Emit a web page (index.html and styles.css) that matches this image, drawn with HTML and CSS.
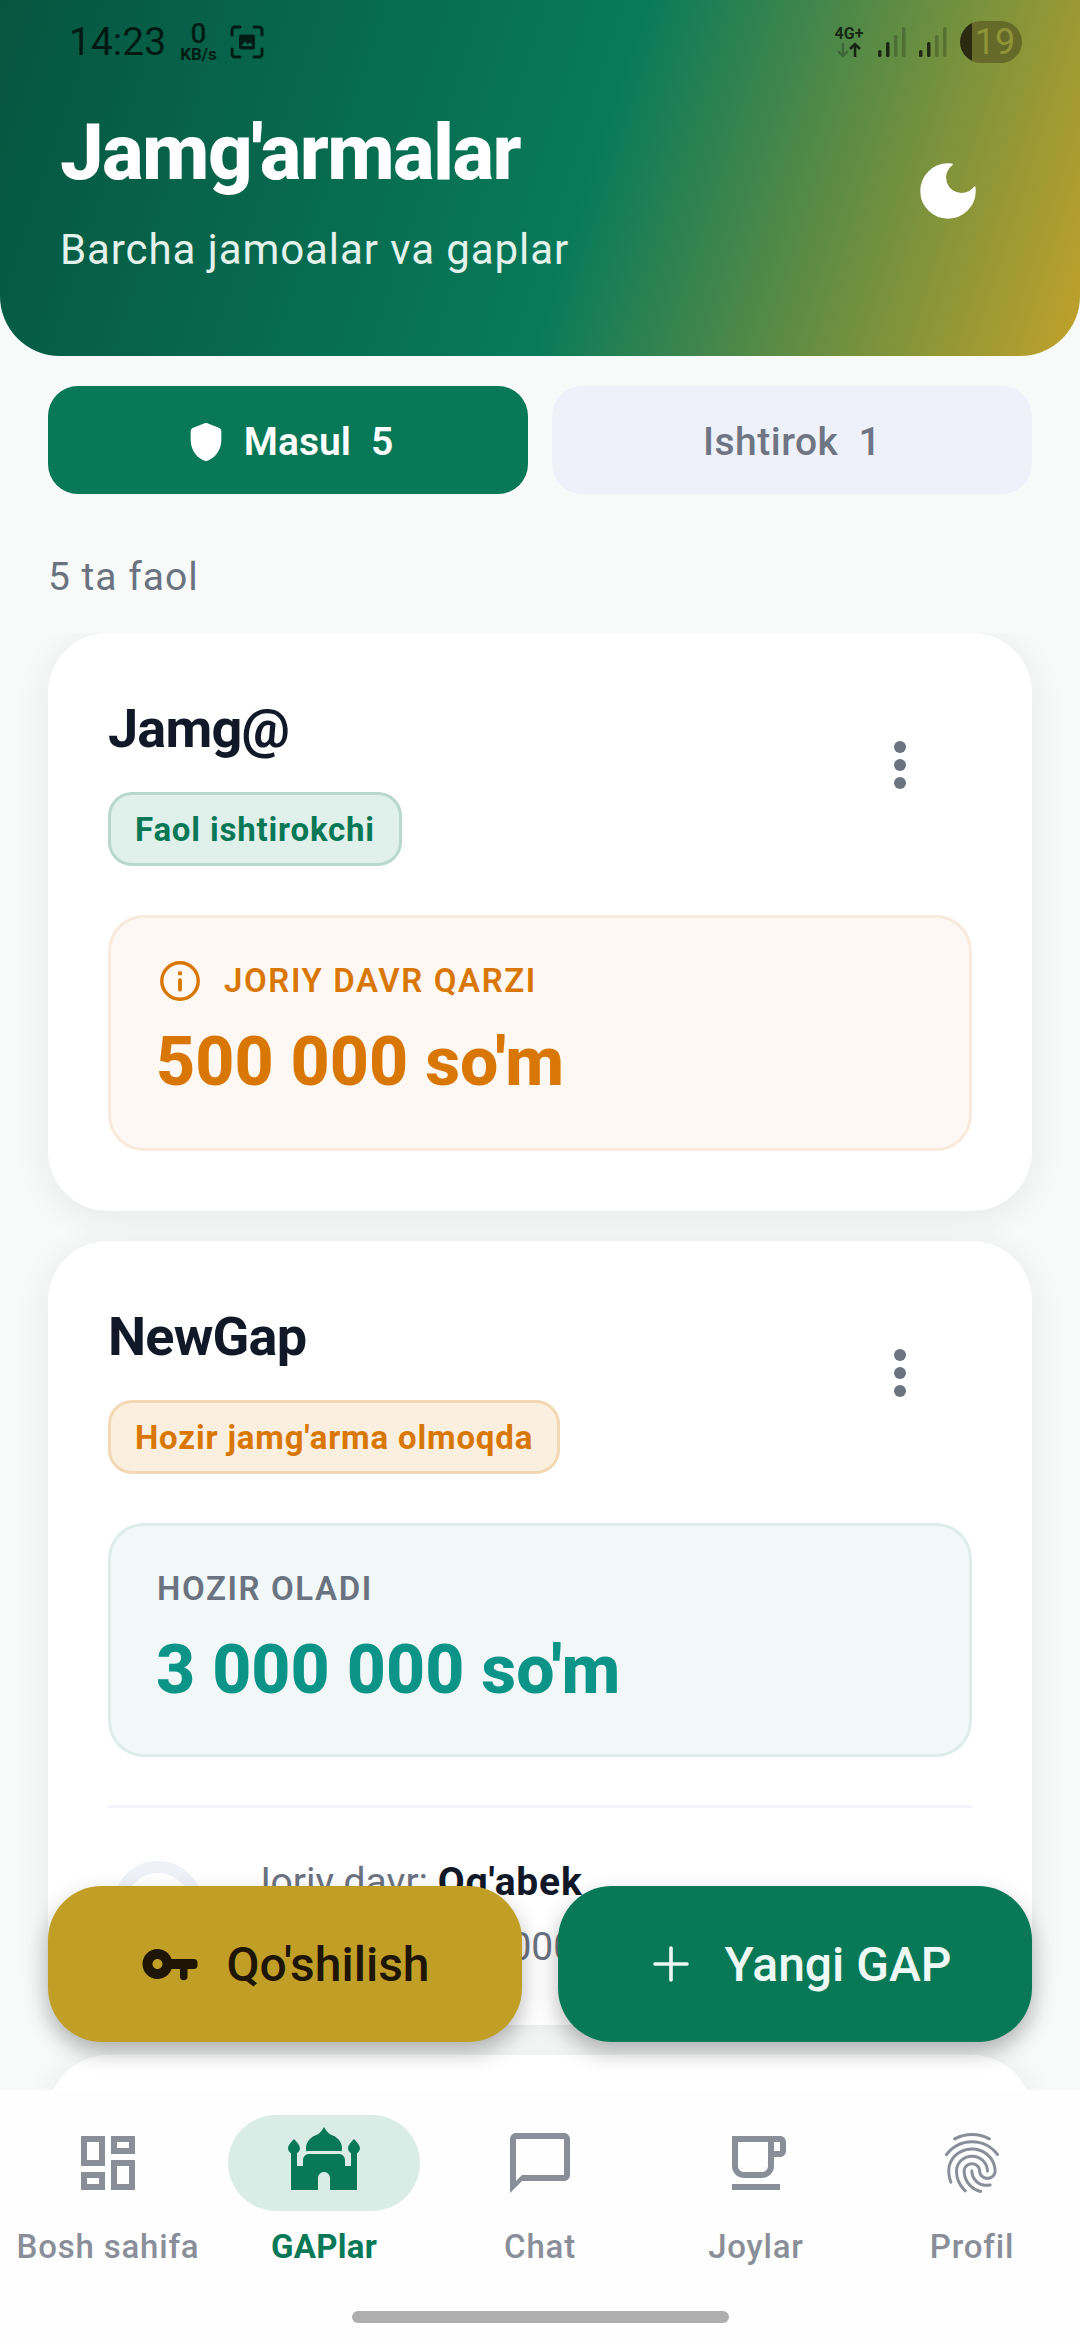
FILE: index.html
```html
<!DOCTYPE html>
<html lang="uz">
<head>
    <meta charset="UTF-8">
    <meta name="viewport" content="width=device-width, initial-scale=1.0">
    <title>Jamg'armalar</title>
    <link rel="stylesheet" href="styles.css">
</head>
<body>
    <div class="app">
        <header class="header">
            <div class="status">
                <span class="status-time">14:23</span>
                <span class="status-speed"><b>0</b><i>KB/s</i></span>
                <svg class="status-shot" viewBox="0 0 36 36"><path d="M3 11V6a3 3 0 0 1 3-3h5M25 3h5a3 3 0 0 1 3 3v5M33 25v5a3 3 0 0 1-3 3h-5M11 33H6a3 3 0 0 1-3-3v-5" fill="none" stroke="currentColor" stroke-width="3" stroke-linecap="round"/><path d="M10 12.5a2 2 0 0 1 2-2h12a2 2 0 0 1 2 2v11a2 2 0 0 1-2 2H12a2 2 0 0 1-2-2z" fill="currentColor"/><path d="M12.5 22l3.5-4.5 2.500 3 2.500-2 3 3.500z" fill="#0a6a50"/></svg>
                <span class="status-spacer"></span>
                <span class="status-net"><b>4G+</b><svg viewBox="0 0 26 16"><path d="M7 1v13M2 9l5 5 5-5" fill="none" stroke="currentColor" stroke-width="2.400" opacity=".35"/><path d="M19 15V2M14 7l5-5 5 5" fill="none" stroke="currentColor" stroke-width="2.600"/></svg></span>
                <svg class="status-signal" viewBox="0 0 28 30"><rect x="0" y="23" width="3.500" height="7" rx="1.500" fill="currentColor"/><rect x="8" y="15" width="3.500" height="15" rx="1.500" fill="currentColor"/><rect x="16" y="8" width="3.500" height="22" rx="1.500" fill="currentColor" opacity=".3"/><rect x="24" y="0" width="3.500" height="30" rx="1.500" fill="currentColor" opacity=".3"/></svg>
                <svg class="status-signal" viewBox="0 0 28 30"><rect x="0" y="23" width="3.500" height="7" rx="1.500" fill="currentColor"/><rect x="8" y="15" width="3.500" height="15" rx="1.500" fill="currentColor"/><rect x="16" y="8" width="3.500" height="22" rx="1.500" fill="currentColor" opacity=".3"/><rect x="24" y="0" width="3.500" height="30" rx="1.500" fill="currentColor" opacity=".3"/></svg>
                <span class="status-battery">19</span>
            </div>
            <div class="header-row">
                <div>
                    <h1>Jamg'armalar</h1>
                    <p>Barcha jamoalar va gaplar</p>
                </div>
                <svg class="moon" viewBox="0 0 24 24"><path d="M12 3a9 9 0 1 0 9 9c0-.46-.04-.92-.1-1.360a5.389 5.389 0 0 1-4.400 2.260 5.403 5.403 0 0 1-3.140-9.800c-.44-.06-.9-.1-1.360-.1z" fill="#fff" stroke="#fff" stroke-width=".5" stroke-linejoin="round"/></svg>
            </div>
        </header>

        <div class="tabs">
            <div class="tab tab-active">
                <svg viewBox="0 0 24 24"><path d="M11.300 2.260l-6 2.250C4.520 4.810 4 5.550 4 6.390v4.710c0 5.050 3.410 9.760 8 10.910 4.590-1.150 8-5.860 8-10.910V6.390c0-.83-.52-1.580-1.300-1.870l-6-2.250c-.45-.17-.95-.17-1.400-.01z" fill="#fff"/></svg>
                <span>Masul</span>
                <span>5</span>
            </div>
            <div class="tab">
                <span>Ishtirok</span>
                <span>1</span>
            </div>
        </div>

        <div class="count">5 ta faol</div>

        <div class="list">
            <div class="card">
                <div class="card-head">
                    <div class="card-info">
                        <h2>Jamg@</h2>
                        <span class="badge badge-green">Faol ishtirokchi</span>
                    </div>
                    <svg class="dots" viewBox="0 0 12 48"><circle cx="6" cy="6" r="6"/><circle cx="6" cy="24" r="6"/><circle cx="6" cy="42" r="6"/></svg>
                </div>
                <div class="amount amount-debt">
                    <div class="amount-label">
                        <svg viewBox="0 0 24 24"><circle cx="12" cy="12" r="9.500" fill="none" stroke="currentColor" stroke-width="1.800"/><path d="M12 11.500v5" stroke="currentColor" stroke-width="2" stroke-linecap="round"/><rect x="11" y="7" width="2" height="2" fill="currentColor"/></svg>
                        JORIY DAVR QARZI
                    </div>
                    <div class="amount-value">500 000 so'm</div>
                </div>
            </div>

            <div class="card">
                <div class="card-head">
                    <div class="card-info">
                        <h2>NewGap</h2>
                        <span class="badge badge-orange">Hozir jamg'arma olmoqda</span>
                    </div>
                    <svg class="dots" viewBox="0 0 12 48"><circle cx="6" cy="6" r="6"/><circle cx="6" cy="24" r="6"/><circle cx="6" cy="42" r="6"/></svg>
                </div>
                <div class="amount amount-now">
                    <div class="amount-label">HOZIR OLADI</div>
                    <div class="amount-value">3 000 000 so'm</div>
                </div>
                <div class="divider"></div>
                <div class="turn">
                    <div class="turn-avatar"></div>
                    <div class="turn-text">
                        <div>Joriy davr: <strong>Og'abek</strong></div>
                        <div>Summa: 3 000 000 so'm</div>
                    </div>
                </div>
            </div>

            <div class="card card-empty"></div>
        </div>

        <div class="actions">
            <div class="action action-join">
                <svg viewBox="0 0 24 24"><path d="M12.650 10C11.830 7.670 9.610 6 7 6c-3.310 0-6 2.690-6 6s2.690 6 6 6c2.610 0 4.830-1.670 5.650-4H16v3a1.500 1.500 0 0 0 3 0v-3h2.500a1.500 1.500 0 0 0 1.500-1.500v-1a1.500 1.500 0 0 0-1.500-1.500H12.650zM7 14c-1.100 0-2-.9-2-2s.9-2 2-2 2 .9 2 2-.9 2-2 2z" fill="currentColor"/></svg>
                Qo'shilish
            </div>
            <div class="action action-new">
                <svg viewBox="0 0 36 36"><path d="M18 2v32M2 18h32" stroke="currentColor" stroke-width="3.600" stroke-linecap="round"/></svg>
                Yangi GAP
            </div>
        </div>

        <nav class="nav">
            <div class="nav-items">
                <div class="nav-item">
                    <div class="nav-icon"><svg viewBox="0 0 24 24"><path d="M19 5v2h-4V5h4M9 5v6H5V5h4m10 8v6h-4v-6h4M9 17v2H5v-2h4M21 3h-8v6h8V3zM11 3H3v10h8V3zm10 8h-8v10h8V11zm-10 4H3v6h8v-6z"/></svg></div>
                    <span>Bosh sahifa</span>
                </div>
                <div class="nav-item nav-active">
                    <div class="nav-icon"><svg viewBox="0 0 24 24"><path d="M7 8h10c.29 0 .57.06.84.13.1-.32.16-.66.16-1.020 0-1.890-1.090-3.010-2.420-3.990C14.050 2.710 12.890 1.710 12 0c-.89 1.710-2.050 2.710-3.580 3.120C7.090 4.100 6 5.220 6 7.110c0 .36.06.7.16 1.020.27-.07.55-.13.84-.13z"/><path d="M24 7c0-1.100-2-3-2-3s-2 1.900-2 3c0 .74.4 1.380 1 1.720V13h-2v-2c0-1.100-.9-2-2-2H7c-1.100 0-2 .9-2 2v2H3V8.720c.6-.34 1-.98 1-1.720 0-1.100-2-3-2-3S0 5.900 0 7c0 .74.4 1.380 1 1.720V21h9v-4c0-1.100.9-2 2-2s2 .9 2 2v4h9V8.720c.6-.34 1-.98 1-1.720z"/></svg></div>
                    <span>GAPlar</span>
                </div>
                <div class="nav-item">
                    <div class="nav-icon"><svg viewBox="0 0 24 24"><path d="M20 2H4c-1.100 0-2 .9-2 2v18l4-4h14c1.100 0 2-.9 2-2V4c0-1.100-.9-2-2-2zm0 14H6l-2 2V4h16v12z"/></svg></div>
                    <span>Chat</span>
                </div>
                <div class="nav-item">
                    <div class="nav-icon"><svg viewBox="0 0 24 24"><path d="M20 3H4v10c0 2.210 1.790 4 4 4h6c2.210 0 4-1.790 4-4v-3h2c1.110 0 2-.89 2-2V5c0-1.110-.89-2-2-2zm-4 10c0 1.100-.9 2-2 2H8c-1.100 0-2-.9-2-2V5h10v8zm4-5h-2V5h2v3zM4 19h16v2H4z"/></svg></div>
                    <span>Joylar</span>
                </div>
                <div class="nav-item">
                    <div class="nav-icon"><svg viewBox="0 0 24 24"><path d="M17.810 4.470c-.08 0-.16-.02-.23-.06C15.660 3.420 14 3 12.010 3c-1.980 0-3.860.47-5.570 1.410-.24.13-.54.04-.68-.2-.13-.24-.04-.55.2-.68C7.820 2.520 9.860 2 12.010 2c2.130 0 3.990.47 6.030 1.520.25.13.34.43.21.67-.09.18-.26.28-.44.28zM3.500 9.720c-.1 0-.2-.03-.29-.09-.23-.16-.28-.47-.12-.7.99-1.400 2.250-2.500 3.750-3.270C9.980 4.040 14 4.030 17.150 5.650c1.500.77 2.760 1.860 3.750 3.250.16.22.11.54-.12.7-.23.16-.54.11-.7-.12-.9-1.260-2.040-2.250-3.390-2.940-2.870-1.470-6.540-1.470-9.400.01-1.360.7-2.500 1.700-3.400 2.960-.08.14-.23.21-.39.21zm6.250 12.070c-.13 0-.26-.05-.35-.15-.87-.87-1.340-1.430-2.010-2.640-.69-1.230-1.050-2.730-1.050-4.340 0-2.970 2.540-5.390 5.660-5.390s5.660 2.420 5.660 5.390c0 .28-.22.5-.5.5s-.5-.22-.5-.5c0-2.420-2.090-4.390-4.660-4.390-2.570 0-4.660 1.970-4.660 4.390 0 1.440.32 2.770.93 3.850.64 1.150 1.080 1.640 1.850 2.420.19.2.19.51 0 .71-.11.1-.24.15-.37.15zm7.170-1.850c-1.190 0-2.240-.3-3.100-.89-1.490-1.010-2.380-2.650-2.380-4.390 0-.28.22-.5.5-.5s.5.22.5.5c0 1.410.72 2.740 1.940 3.560.71.48 1.540.71 2.540.71.24 0 .64-.03 1.040-.1.27-.05.53.13.58.41.05.27-.13.53-.41.58-.57.11-1.070.12-1.210.12zM14.910 22c-.04 0-.09-.01-.13-.02-1.590-.44-2.630-1.030-3.720-2.100-1.400-1.390-2.170-3.240-2.170-5.220 0-1.620 1.380-2.940 3.080-2.940 1.700 0 3.080 1.320 3.080 2.940 0 1.070.93 1.940 2.080 1.940s2.080-.87 2.080-1.940c0-3.770-3.250-6.830-7.250-6.830-2.840 0-5.440 1.580-6.610 4.030-.39.81-.59 1.760-.59 2.800 0 .78.07 2.010.67 3.610.1.26-.03.55-.29.64-.26.1-.55-.04-.64-.29-.49-1.310-.73-2.610-.73-3.960 0-1.200.23-2.290.68-3.240 1.330-2.790 4.280-4.600 7.510-4.600 4.550 0 8.250 3.510 8.250 7.830 0 1.620-1.380 2.940-3.080 2.940s-3.080-1.320-3.080-2.940c0-1.070-.93-1.940-2.080-1.940s-2.080.87-2.080 1.940c0 1.710.66 3.310 1.870 4.510.95.94 1.860 1.460 3.270 1.850.27.07.42.35.35.61-.05.23-.26.38-.47.38z"/></svg></div>
                    <span>Profil</span>
                </div>
            </div>
            <div class="home-bar"></div>
        </nav>
    </div>
</body>
</html>
```

FILE: styles.css
```css
* {
    box-sizing: border-box;
}
body {
    margin: 0;
    font-family: Roboto, "Liberation Sans", sans-serif;
    background: #f7faf9;
}
.app {
    position: relative;
    width: 1080px;
    height: 2340px;
    display: flex;
    flex-direction: column;
    overflow: hidden;
    background: #f7faf9;
}

/* header */
.header {
    height: 356px;
    flex-shrink: 0;
    padding: 0 60px;
    border-radius: 0 0 60px 60px;
    background: linear-gradient(108deg, #06553f 0%, #087a5a 54%, #c2a12a 100%);
}
.status {
    height: 72px;
    padding: 12px 0 0 9px;
    margin-right: -2px;
    display: flex;
    align-items: center;
    color: rgba(0, 0, 0, 0.72);
}
.status-time {
    font-size: 39px;
}
.status-speed {
    margin-left: 14px;
    display: flex;
    flex-direction: column;
    align-items: center;
}
.status-speed b {
    font-size: 28px;
    font-weight: 500;
    line-height: 24px;
}
.status-speed i {
    font-size: 17px;
    font-weight: 700;
    font-style: normal;
    line-height: 16px;
}
.status-shot {
    width: 36px;
    height: 36px;
    margin-left: 12px;
}
.status-spacer {
    flex: 1;
}
.status-net {
    width: 34px;
    display: flex;
    flex-direction: column;
    align-items: center;
    margin-right: 12px;
}
.status-net b {
    font-size: 16px;
    line-height: 16px;
    font-weight: 700;
}
.status-net svg {
    width: 26px;
    height: 16px;
}
.status-signal {
    width: 28px;
    height: 30px;
    margin-right: 13px;
}
.status-battery {
    width: 62px;
    height: 42px;
    border-radius: 21px;
    text-align: center;
    font-size: 36px;
    line-height: 42px;
    padding-left: 8px;
    color: #8f9438;
    background: linear-gradient(to right, #2a2b10 19%, #666a29 19%);
}
.header-row {
    margin-top: 36px;
    display: flex;
    align-items: center;
    justify-content: space-between;
}
.header-row h1 {
    margin: 0;
    font-size: 78px;
    line-height: 90px;
    font-weight: 800;
    letter-spacing: -1.6px;
    color: #fff;
}
.header-row p {
    margin: 25px 0 0;
    font-size: 42px;
    line-height: 54px;
    letter-spacing: 0.92px;
    color: #e3f2ec;
}
.moon {
    width: 72px;
    height: 72px;
    margin: 0 36px 4px 0;
}

/* tabs */
.tabs {
    margin: 30px 48px 0;
    display: grid;
    grid-template-columns: 480px 480px;
    gap: 24px;
    flex-shrink: 0;
}
.tab {
    height: 108px;
    padding-top: 3px;
    border-radius: 30px;
    display: flex;
    align-items: center;
    justify-content: center;
    gap: 20px;
    font-size: 39px;
    font-weight: 500;
    letter-spacing: 0.5px;
    color: #6f7583;
    background: #eef1f9;
}
.tab-active {
    color: #fff;
    font-weight: 600;
    letter-spacing: 0;
    background: #087857;
}
.tab-active svg {
    width: 46px;
    height: 46px;
    margin-right: -5px;
}
.count {
    margin: 59px 48px 32px;
    font-size: 39px;
    line-height: 48px;
    letter-spacing: 1px;
    color: #6b7280;
    flex-shrink: 0;
}

/* cards */
.list {
    flex: 1;
    min-height: 0;
    padding: 0 48px;
    display: flex;
    flex-direction: column;
    gap: 30px;
    overflow: hidden;
}
.card {
    flex-shrink: 0;
    padding: 60px;
    border-radius: 60px;
    background: #fff;
    box-shadow: 0 6px 36px rgba(0, 0, 0, 0.07);
}
.card-empty {
    height: 300px;
}
.card-head {
    display: flex;
    align-items: flex-start;
    justify-content: space-between;
}
.card-info {
    display: flex;
    flex-direction: column;
    align-items: flex-start;
}
.card-info h2 {
    margin: 0 0 27px;
    font-size: 54px;
    line-height: 72px;
    font-weight: 700;
    letter-spacing: -0.8px;
    color: #111827;
}
.dots {
    width: 12px;
    height: 48px;
    margin: 48px 66px 0 0;
    fill: #6b7280;
}
.badge {
    height: 74px;
    padding: 0 24px;
    display: flex;
    align-items: center;
    border-radius: 24px;
    border: 3px solid;
    font-size: 33px;
    font-weight: 700;
    letter-spacing: 0.82px;
}
.badge-green {
    color: #087857;
    background: #e0f0ea;
    border-color: #b8d8cd;
}
.badge-orange {
    color: #d97706;
    background: #fbefe0;
    border-color: #f3d8b6;
}
.amount {
    margin-top: 49px;
    padding: 42px 46px 44px;
    border-radius: 36px;
    border: 3px solid;
}
.amount-debt {
    padding-bottom: 46px;
    color: #d97706;
    background: #fdf8f3;
    border-color: #f8ebdd;
}
.amount-now {
    color: #0d9488;
    background: #f1f8f7;
    border-color: #deedea;
}
.amount-label {
    display: flex;
    align-items: center;
    gap: 24px;
    font-size: 33px;
    line-height: 42px;
    font-weight: 600;
    letter-spacing: 1.6px;
}
.amount-label svg {
    width: 46px;
    height: 46px;
    margin: -2px -3px -2px 0;
}
.amount-now .amount-label {
    color: #6b7280;
}
.amount-value {
    margin-top: 20px;
    margin-left: -1px;
    font-size: 68px;
    line-height: 80px;
    font-weight: 800;
}
.divider {
    height: 3px;
    margin-top: 48px;
    background: #f4f5fa;
}
.turn {
    margin: 53px 0 -6px;
    display: flex;
    gap: 46px;
}
.turn-avatar {
    width: 90px;
    height: 90px;
    margin-left: 5px;
    flex-shrink: 0;
    border-radius: 50%;
    border: 12px solid #eef1f8;
}
.turn-text {
    margin-top: -3px;
    font-size: 39px;
    line-height: 48px;
    color: #6b7280;
    white-space: nowrap;
}
.turn-text div + div {
    margin-top: 17px;
}
.turn-text strong {
    letter-spacing: 0.8px;
    color: #111827;
}

/* floating buttons */
.actions {
    position: absolute;
    left: 48px;
    right: 48px;
    top: 1886px;
    display: grid;
    grid-template-columns: 474px 474px;
    gap: 36px;
}
.action {
    height: 156px;
    border-radius: 54px;
    display: flex;
    align-items: center;
    justify-content: center;
    gap: 26px;
    font-size: 48px;
    font-weight: 500;
    box-shadow: 0 10px 22px rgba(0, 0, 0, 0.28);
}
.action-join {
    color: #1f1505;
    background: #c19f27;
}
.action-join svg {
    width: 60px;
    height: 60px;
}
.action-new {
    padding-left: 14px;
    color: #eef8f4;
    background: #087857;
    gap: 36px;
}
.action-new svg {
    width: 36px;
    height: 36px;
}

/* bottom nav */
.nav {
    flex-shrink: 0;
    height: 250px;
    position: relative;
    background: #fefefe;
}
.nav-items {
    padding-top: 25px;
    display: grid;
    grid-template-columns: repeat(5, 216px);
}
.nav-item {
    display: flex;
    flex-direction: column;
    align-items: center;
    gap: 15px;
    font-size: 33px;
    line-height: 42px;
    font-weight: 500;
    letter-spacing: 0.8px;
    color: #8a8e99;
}
.nav-icon {
    width: 192px;
    height: 96px;
    display: flex;
    align-items: center;
    justify-content: center;
    border-radius: 48px;
}
.nav-icon svg {
    width: 72px;
    height: 72px;
    fill: currentColor;
}
.nav-active {
    color: #087857;
    font-weight: 700;
    letter-spacing: 0.3px;
}
.nav-active .nav-icon {
    background: #d9ece6;
}
.home-bar {
    position: absolute;
    left: 352px;
    bottom: 17px;
    width: 377px;
    height: 12px;
    border-radius: 6px;
    background: #aeaeae;
}
```
